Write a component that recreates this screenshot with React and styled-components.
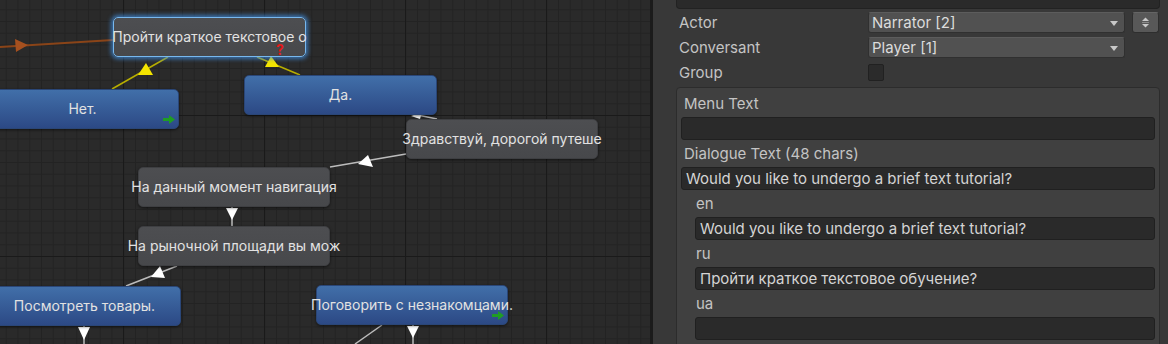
import styled, { createGlobalStyle } from 'styled-components';

const GlobalStyle = createGlobalStyle`
  html, body {
    margin: 0;
    padding: 0;
    background: #2a2a2a;
    overflow: hidden;
  }
  * { box-sizing: border-box; }
`;

const NODES = [
  { x: 113, y: 17, w: 193, text: 'Пройти краткое текстовое о', kind: 'dialog', selected: true, question: true },
  { x: -14, y: 89, w: 193, text: 'Нет.', kind: 'response', link: true },
  { x: 244, y: 75, w: 193, text: 'Да.', kind: 'response' },
  { x: 406, y: 119, w: 192, text: 'Здравствуй, дорогой путеше', kind: 'dialog' },
  { x: 138, y: 167, w: 192, text: 'На данный момент навигация', kind: 'dialog' },
  { x: 138, y: 226, w: 192, text: 'На рыночной площади вы мож', kind: 'dialog' },
  { x: -12, y: 286, w: 193, text: 'Посмотреть товары.', kind: 'response' },
  { x: 316, y: 285, w: 192, text: 'Поговорить с незнакомцами.', kind: 'response', link: true },
];

const LINKS = [
  { from: [0, 47], to: [113, 40], color: '#8a4418', width: 2, arrow: '15,39 28,45 16,52', fill: '#a5501f' },
  { from: [112, 89], to: [168, 57], color: '#b8ae00', width: 1.5, arrow: '138,75 153,75 146,63', fill: '#f3e400' },
  { from: [300, 75], to: [257, 57], color: '#b8ae00', width: 1.5, arrow: '265,67 279,67 271,56', fill: '#f3e400' },
  { from: [413, 114], to: [437, 119], color: '#bcbcbc', width: 1.5, arrow: '411,116 422,112 420,119', fill: '#ffffff' },
  { from: [406, 154], to: [330, 167], color: '#bcbcbc', width: 1.5, arrow: '358,164 368,155 373,167', fill: '#ffffff' },
  { from: [232, 207], to: [232, 226], color: '#bcbcbc', width: 1.5, arrow: '226,208 238,208 232,220', fill: '#ffffff' },
  { from: [177, 266], to: [126, 286], color: '#bcbcbc', width: 1.5, arrow: '151,277 165,278 160,266', fill: '#ffffff' },
  { from: [84, 326], to: [84, 344], color: '#bcbcbc', width: 1.5, arrow: '78,327 90,327 84,340', fill: '#ffffff' },
  { from: [413, 325], to: [413, 344], color: '#bcbcbc', width: 1.5, arrow: '407,326 419,326 413,338', fill: '#ffffff' },
  { from: [382, 325], to: [355, 344], color: '#bcbcbc', width: 1.5 },
];

const LOCALES = [
  { code: 'en', value: 'Would you like to undergo a brief text tutorial?' },
  { code: 'ru', value: 'Пройти краткое текстовое обучение?' },
  { code: 'ua', value: '' },
];

const Window = styled.div`
  display: flex;
  width: 1168px;
  height: 344px;
  font-family: Inter, "Noto Sans", sans-serif;
`;

const Canvas = styled.div`
  position: relative;
  width: 650px;
  height: 100%;
  overflow: hidden;
  font-size: 14px;
  background-color: #2a2a2a;
  background-image:
    linear-gradient(to right, #1a1a1a 1px, transparent 1px),
    linear-gradient(to bottom, #1a1a1a 1px, transparent 1px),
    linear-gradient(to right, #232323 1px, transparent 1px),
    linear-gradient(to bottom, #232323 1px, transparent 1px);
  background-size: 141px 141px, 141px 141px, 11.75px 11.75px, 11.75px 11.75px;
  background-position: 123px 0, 0 115px, 5.75px 0, 0 9.25px;
`;

const Wires = styled.svg`
  position: absolute;
  left: 0;
  top: 0;
`;

const Node = styled.div`
  position: absolute;
  height: 40px;
  padding-bottom: 1px;
  display: flex;
  align-items: center;
  justify-content: center;
  white-space: nowrap;
  color: #e2e2e2;
  border-radius: 5px;
  background: ${p => (p.$kind === 'response'
    ? 'linear-gradient(to bottom, #416fa9, #2c4985)'
    : 'linear-gradient(to bottom, #4d4e51, #47484b)')};
  border: 1px solid ${p => (p.$selected ? '#78b8ee' : p.$kind === 'response' ? '#2a4677' : '#3e3f42')};
  box-shadow: ${p => (p.$selected
    ? '0 0 4px 2px rgba(64, 140, 220, 0.75)'
    : '0 1px 3px rgba(0, 0, 0, 0.55)')};
`;

const Question = styled.span`
  position: absolute;
  left: 162px;
  top: 26px;
  color: #e51a1a;
  font-weight: 700;
  font-size: 14px;
  line-height: 12px;
`;

const LinkMark = styled.svg`
  position: absolute;
  right: 3px;
  bottom: 4px;
`;

const Divider = styled.div`
  width: 3px;
  background: #1b1b1b;
`;

const Inspector = styled.div`
  flex: 1;
  background: #383838;
  padding: 0 8px 0 23px;
  color: #c4c4c4;
  font-size: 15px;
  overflow: hidden;
`;

const StubField = styled.div`
  height: 9px;
  margin-bottom: 1px;
  background: #2a2a2a;
  border: 1px solid #222;
  border-top: none;
  border-radius: 0 0 4px 4px;
`;

const PropRow = styled.div`
  display: grid;
  grid-template-columns: 185px 257px 27px;
  column-gap: 7px;
  align-items: center;
  height: 25px;
`;

const Label = styled.div`
  padding-left: ${p => (p.$indent ? 15 : 3)}px;
  line-height: ${p => p.$h || 25}px;
  height: ${p => p.$h || 25}px;
  white-space: nowrap;
`;

const Dropdown = styled.div`
  position: relative;
  height: 21px;
  display: flex;
  align-items: center;
  padding-left: 3px;
  color: #dcdcdc;
  background: #515151;
  border: 1px solid #303030;
  border-top-color: #5c5c5c;
  border-radius: 3px;
  &::after {
    content: '';
    position: absolute;
    right: 6px;
    top: 8px;
    border-left: 4.5px solid transparent;
    border-right: 4.5px solid transparent;
    border-top: 5px solid #c8c8c8;
  }
`;

const StepButton = styled.div`
  height: 21px;
  display: flex;
  align-items: center;
  justify-content: center;
  background: #585858;
  border: 1px solid #2e2e2e;
  border-top-color: #656565;
  border-radius: 3px;
`;

const Checkbox = styled.div`
  width: 16px;
  height: 17px;
  background: #2b2b2b;
  border: 1px solid #212121;
  border-radius: 2px;
`;

const Section = styled.div`
  margin-top: 2px;
  padding: 2px 4px 0 4px;
  background: #404040;
  border: 1px solid #2c2c2c;
  border-radius: 4px;
  height: 270px;
`;

const Field = styled.div`
  height: 23px;
  margin-left: ${p => (p.$indent ? 14 : 0)}px;
  padding-left: 4px;
  display: flex;
  align-items: center;
  color: #d4d4d4;
  white-space: nowrap;
  background: #2a2a2a;
  border: 1px solid #202020;
  border-radius: 3px;
`;

const Arrow = () => (
  <LinkMark width="12" height="9" viewBox="0 0 12 9">
    <rect x="0" y="3" width="7" height="3" fill="#1f9d24" />
    <polygon points="6,0 12,4.5 6,9" fill="#1f9d24" />
  </LinkMark>
);

const StepIcon = () => (
  <svg width="9" height="13" viewBox="0 0 9 13">
    <polygon points="1,5 8,5 4.5,1.5" fill="#c8c8c8" />
    <rect x="1" y="6" width="7" height="1" fill="#8a8a8a" />
    <polygon points="1,8 8,8 4.5,11.5" fill="#c8c8c8" />
  </svg>
);

const GraphView = () => (
  <Canvas>
    <Wires width="650" height="344">
      {LINKS.map((l, i) => (
        <g key={i}>
          <line x1={l.from[0]} y1={l.from[1]} x2={l.to[0]} y2={l.to[1]} stroke={l.color} strokeWidth={l.width} />
          {l.arrow && <polygon points={l.arrow} fill={l.fill} />}
        </g>
      ))}
    </Wires>
    {NODES.map(n => (
      <Node key={n.text} $kind={n.kind} $selected={n.selected} style={{ left: n.x, top: n.y, width: n.w }}>
        {n.text}
        {n.question && <Question>?</Question>}
        {n.link && <Arrow />}
      </Node>
    ))}
  </Canvas>
);

const DialogueInspector = () => (
  <Inspector>
    <StubField />
    <PropRow>
      <Label>Actor</Label>
      <Dropdown>Narrator [2]</Dropdown>
      <StepButton><StepIcon /></StepButton>
    </PropRow>
    <PropRow>
      <Label>Conversant</Label>
      <Dropdown>Player [1]</Dropdown>
    </PropRow>
    <PropRow>
      <Label>Group</Label>
      <Checkbox />
    </PropRow>
    <Section>
      <Label $h={27}>Menu Text</Label>
      <Field />
      <Label $h={27}>Dialogue Text (48 chars)</Label>
      <Field>Would you like to undergo a brief text tutorial?</Field>
      {LOCALES.map(l => (
        <div key={l.code}>
          <Label $h={27} $indent>{l.code}</Label>
          <Field $indent>{l.value}</Field>
        </div>
      ))}
    </Section>
  </Inspector>
);

export default function App() {
  return (
    <>
      <GlobalStyle />
      <Window>
        <GraphView />
        <Divider />
        <DialogueInspector />
      </Window>
    </>
  );
}
